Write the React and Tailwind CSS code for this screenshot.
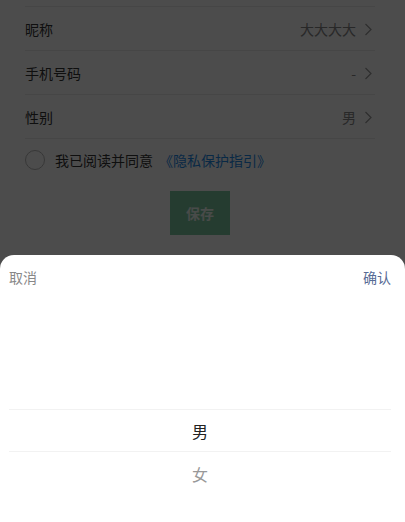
import React from "react";

const font = { fontFamily: '"Noto Sans CJK SC", "Noto Sans", sans-serif' };

function Chevron() {
  return (
    <svg width="8" height="13" viewBox="0 0 8 13" className="ml-[8px]">
      <path d="M1.5 1 L7 6.5 L1.5 12" fill="none" stroke="#999" strokeWidth="1.2" />
    </svg>
  );
}

function Row({ label, value }) {
  return (
    <div className="flex items-center justify-between h-[44px] pt-[1px] border-b border-[#ececec]">
      <span className="text-[14px] text-[#333]">{label}</span>
      <div className="flex items-center pr-[3px]">
        <span className="text-[14px] text-[#888]">{value}</span>
        <Chevron />
      </div>
    </div>
  );
}

export default function App() {
  return (
    <div className="relative h-[522px] w-[405px] overflow-hidden bg-white" style={font}>
      <div className="pl-[25px] pr-[30px]">
        <div className="h-[7px] border-b border-[#ececec]" />
        <Row label="昵称" value="大大大大" />
        <Row label="手机号码" value="-" />
        <Row label="性别" value="男" />
        <div className="flex items-center h-[42px]">
          <div className="w-[20px] h-[20px] rounded-full border border-[#b8b8b8]" />
          <span className="ml-[10px] text-[14px] text-[#333]">我已阅读并同意</span>
          <span className="ml-[6px] text-[14px] text-[#1e8ae8]">《隐私保护指引》</span>
        </div>
        <div className="flex justify-center mt-[10px]">
          <div className="w-[60px] h-[44px] bg-[#7cc8a0] flex items-center justify-center text-[14px] font-bold text-white/90">
            保存
          </div>
        </div>
      </div>

      <div className="absolute inset-0 bg-black/70" />

      <div className="absolute left-0 right-0 bottom-0 h-[267px] bg-white rounded-t-[14px]">
        <div className="flex items-center justify-between h-[44px] pl-[9px] pr-[14px]">
          <span className="text-[14px] text-[#888]">取消</span>
          <span className="text-[14px] text-[#576b95]">确认</span>
        </div>
        <div className="pl-[9px] pr-[14px] pt-[110px]">
          <div className="h-[43px] flex items-center justify-center border-t border-b border-[#f2f2f2] text-[16px] text-[#222]">
            男
          </div>
          <div className="h-[43px] flex items-center justify-center text-[16px] text-[#999]">
            女
          </div>
        </div>
      </div>
    </div>
  );
}
